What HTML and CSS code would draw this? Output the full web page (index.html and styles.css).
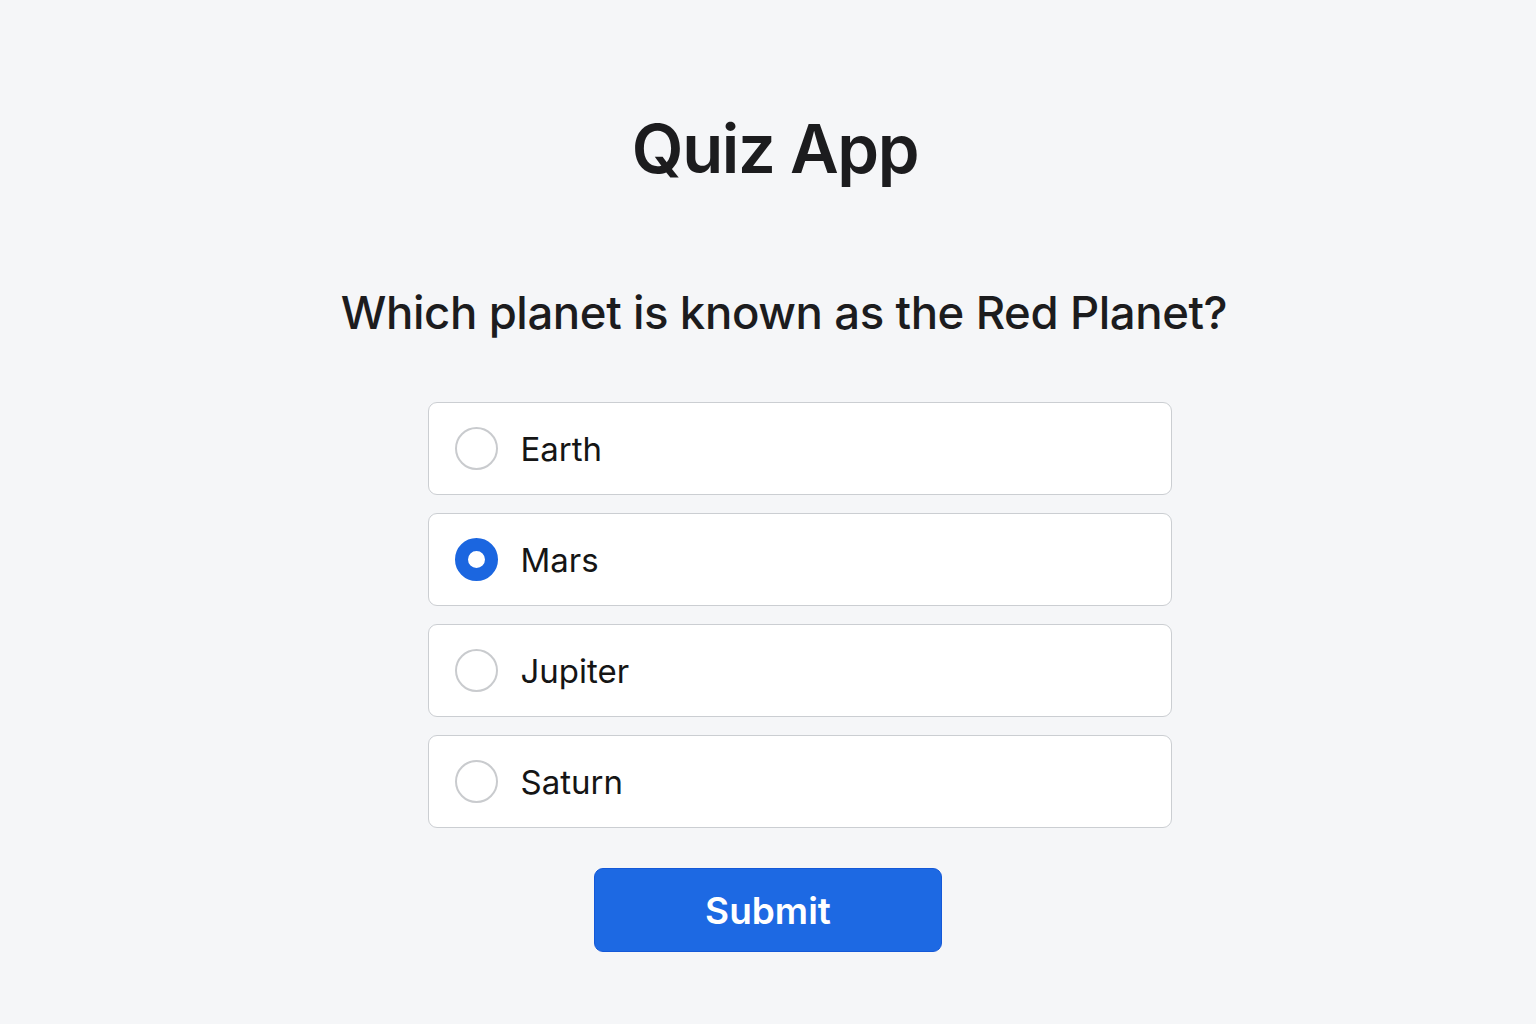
FILE: index.html
```html
<!DOCTYPE html>
<html lang="en">
<head>
<meta charset="utf-8">
<title>Quiz App</title>
<link rel="stylesheet" href="styles.css">
</head>
<body>
<main class="quiz">
  <h1 class="title">Quiz App</h1>
  <h2 class="question">Which planet is known as the Red Planet?</h2>
  <div class="options">
    <label class="option"><span class="radio"></span><span class="label">Earth</span></label>
    <label class="option"><span class="radio checked"></span><span class="label">Mars</span></label>
    <label class="option"><span class="radio"></span><span class="label">Jupiter</span></label>
    <label class="option"><span class="radio"></span><span class="label">Saturn</span></label>
  </div>
  <button class="submit">Submit</button>
</main>
</body>
</html>
```
FILE: styles.css
```css
html, body {
  margin: 0;
  padding: 0;
  background: #f5f6f8;
}
body {
  font-family: Inter, "Noto Sans", sans-serif;
  color: #1c1c1e;
  width: 1536px;
  height: 1024px;
  overflow: hidden;
}
.quiz {
  display: flex;
  flex-direction: column;
  align-items: center;
  padding-top: 104px;
}
.title {
  margin: 0 0 0 14px;
  font-size: 67px;
  font-weight: 600;
  line-height: 90px;
  letter-spacing: -1.4px;
}
.question {
  margin: 89px 0 0 32px;
  font-size: 45.5px;
  font-weight: 500;
  line-height: 60px;
  letter-spacing: -0.4px;
}
.options {
  margin: 59px 0 0 63px;
  width: 744px;
  display: flex;
  flex-direction: column;
  gap: 18px;
}
.option {
  box-sizing: border-box;
  height: 93px;
  background: #fff;
  border: 1px solid #cbced2;
  border-radius: 9px;
  display: flex;
  align-items: center;
  padding-left: 26px;
  gap: 23px;
}
.radio {
  box-sizing: border-box;
  width: 43px;
  height: 43px;
  border-radius: 50%;
  border: 2px solid #c9cbce;
  background: #fff;
  flex: none;
}
.radio.checked {
  border: 13px solid #1b66e0;
  background: #fff;
}
.label {
  font-size: 33px;
  font-weight: 400;
  color: #151515;
}
.submit {
  margin: 40px 0 0 0;
  width: 348px;
  height: 84px;
  border: 1px solid #1458d8;
  border-radius: 9px;
  background: #1d69e3;
  color: #fff;
  font-family: Inter, "Noto Sans", sans-serif;
  font-size: 37px;
  font-weight: 600;
  cursor: pointer;
}
```
